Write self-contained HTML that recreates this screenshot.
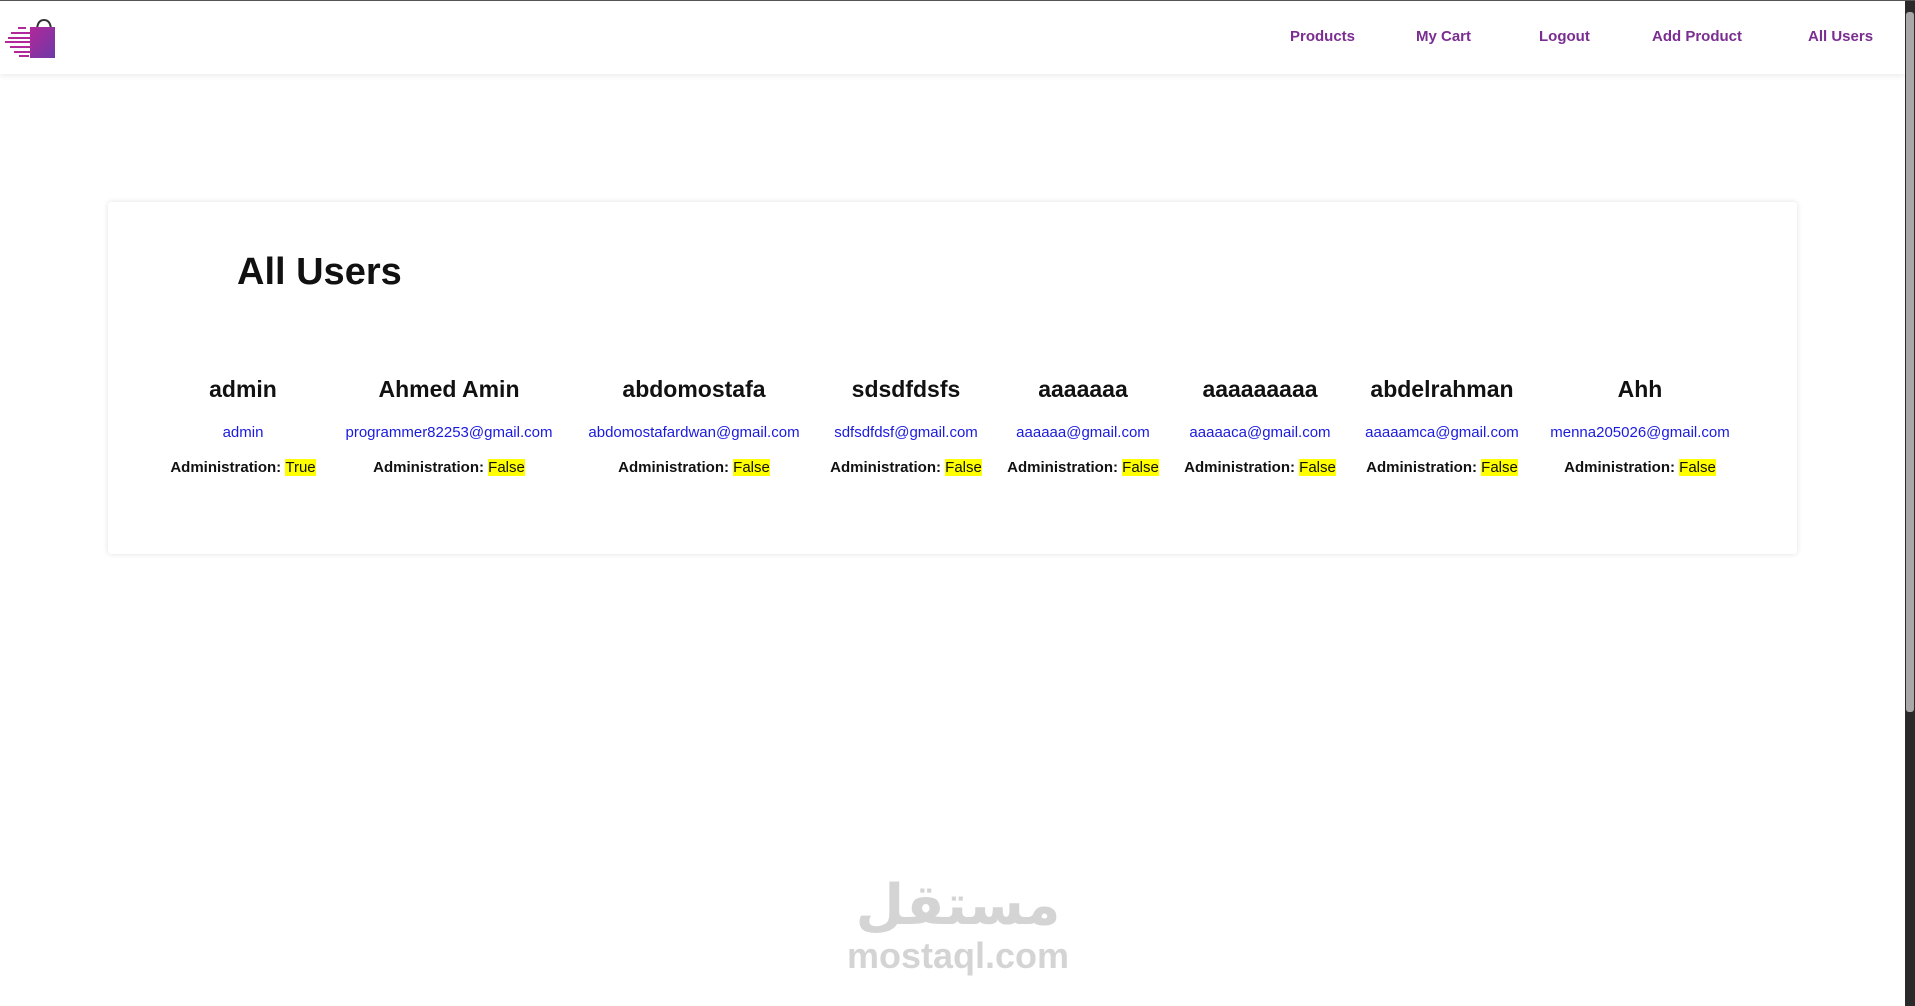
<!DOCTYPE html>
<html><head><meta charset="utf-8"><style>
*{margin:0;padding:0;box-sizing:border-box}
body{width:1915px;height:1005px;background:#fff;font-family:"Liberation Sans",sans-serif;position:relative;overflow:hidden;border-top:1px solid #555}
.nav{position:absolute;left:0;top:1px;width:1905px;height:72px;background:#fff;box-shadow:0 2px 6px rgba(0,0,0,.08)}
.nav a{position:absolute;top:26px;font-size:15px;font-weight:bold;color:#7b2d91;text-decoration:none;white-space:nowrap}
.card{position:absolute;left:108px;top:201px;width:1689px;height:352px;background:#fff;box-shadow:0 0 6px rgba(0,0,0,.12);border-radius:3px}
h1{position:absolute;left:237px;top:250px;font-size:38px;color:#111;font-weight:bold}
.col{position:absolute;top:374px;width:260px;margin-left:-130px;text-align:center;white-space:nowrap}
.col .n{font-size:23px;font-weight:bold;color:#111;height:49px;line-height:28px}
.col .e{font-size:15px;color:#1a1adf;height:35px;line-height:18px}
.col .a{font-size:15px;font-weight:bold;color:#111;line-height:18px}
.col .a span{background:#ffff00;font-weight:normal}
.sb{position:absolute;right:0;top:0;width:10px;height:1005px;background:#2a2a2a}
.sb div{position:absolute;left:1px;top:11px;width:8px;height:700px;background:#a8a8a8;border-radius:3px}
.wm{position:absolute;left:840px;top:875px;width:236px;text-align:center;color:#d4d4d4;font-weight:bold}
</style></head><body>
<div class="nav">
<svg style="position:absolute;left:5px;top:16px" width="50" height="42" viewBox="0 0 50 42">
<defs><linearGradient id="g" x1="0" y1="0" x2="1" y2="1"><stop offset="0" stop-color="#b0289a"/><stop offset="1" stop-color="#6a3aa8"/></linearGradient></defs>
<path d="M32 13 Q32 2 39 2 Q46 2 46 13" fill="none" stroke="#333" stroke-width="2"/>
<path d="M25 9 L51 9 L53 40 L25 40 Z" fill="url(#g)"/>
<g fill="#b0289a"><rect x="13" y="9" width="8" height="2"/><rect x="6" y="14" width="22" height="2"/><rect x="3" y="19" width="25" height="2"/><rect x="0" y="23" width="28" height="2"/><rect x="5" y="28" width="22" height="2"/><rect x="9" y="33" width="18" height="2"/><rect x="14" y="37" width="10" height="2"/></g>
</svg>
<a style="left:1290px">Products</a><a style="left:1416px">My Cart</a><a style="left:1539px">Logout</a><a style="left:1652px">Add Product</a><a style="left:1808px">All Users</a>
</div>
<div class="card"></div>
<h1>All Users</h1>
<div class="col" style="left:243px"><div class="n">admin</div><div class="e">admin</div><div class="a">Administration: <span>True</span></div></div>
<div class="col" style="left:449px"><div class="n">Ahmed Amin</div><div class="e">programmer82253@gmail.com</div><div class="a">Administration: <span>False</span></div></div>
<div class="col" style="left:694px"><div class="n">abdomostafa</div><div class="e">abdomostafardwan@gmail.com</div><div class="a">Administration: <span>False</span></div></div>
<div class="col" style="left:906px"><div class="n">sdsdfdsfs</div><div class="e">sdfsdfdsf@gmail.com</div><div class="a">Administration: <span>False</span></div></div>
<div class="col" style="left:1083px"><div class="n">aaaaaaa</div><div class="e">aaaaaa@gmail.com</div><div class="a">Administration: <span>False</span></div></div>
<div class="col" style="left:1260px"><div class="n">aaaaaaaaa</div><div class="e">aaaaaca@gmail.com</div><div class="a">Administration: <span>False</span></div></div>
<div class="col" style="left:1442px"><div class="n">abdelrahman</div><div class="e">aaaaamca@gmail.com</div><div class="a">Administration: <span>False</span></div></div>
<div class="col" style="left:1640px"><div class="n">Ahh</div><div class="e">menna205026@gmail.com</div><div class="a">Administration: <span>False</span></div></div>
<div class="wm"><div style="font-size:56px;line-height:60px;font-family:'DejaVu Sans',sans-serif">مستقل</div><div style="font-size:36px;line-height:40px">mostaql.com</div></div>
<div class="sb"><div></div></div>
</body></html>
